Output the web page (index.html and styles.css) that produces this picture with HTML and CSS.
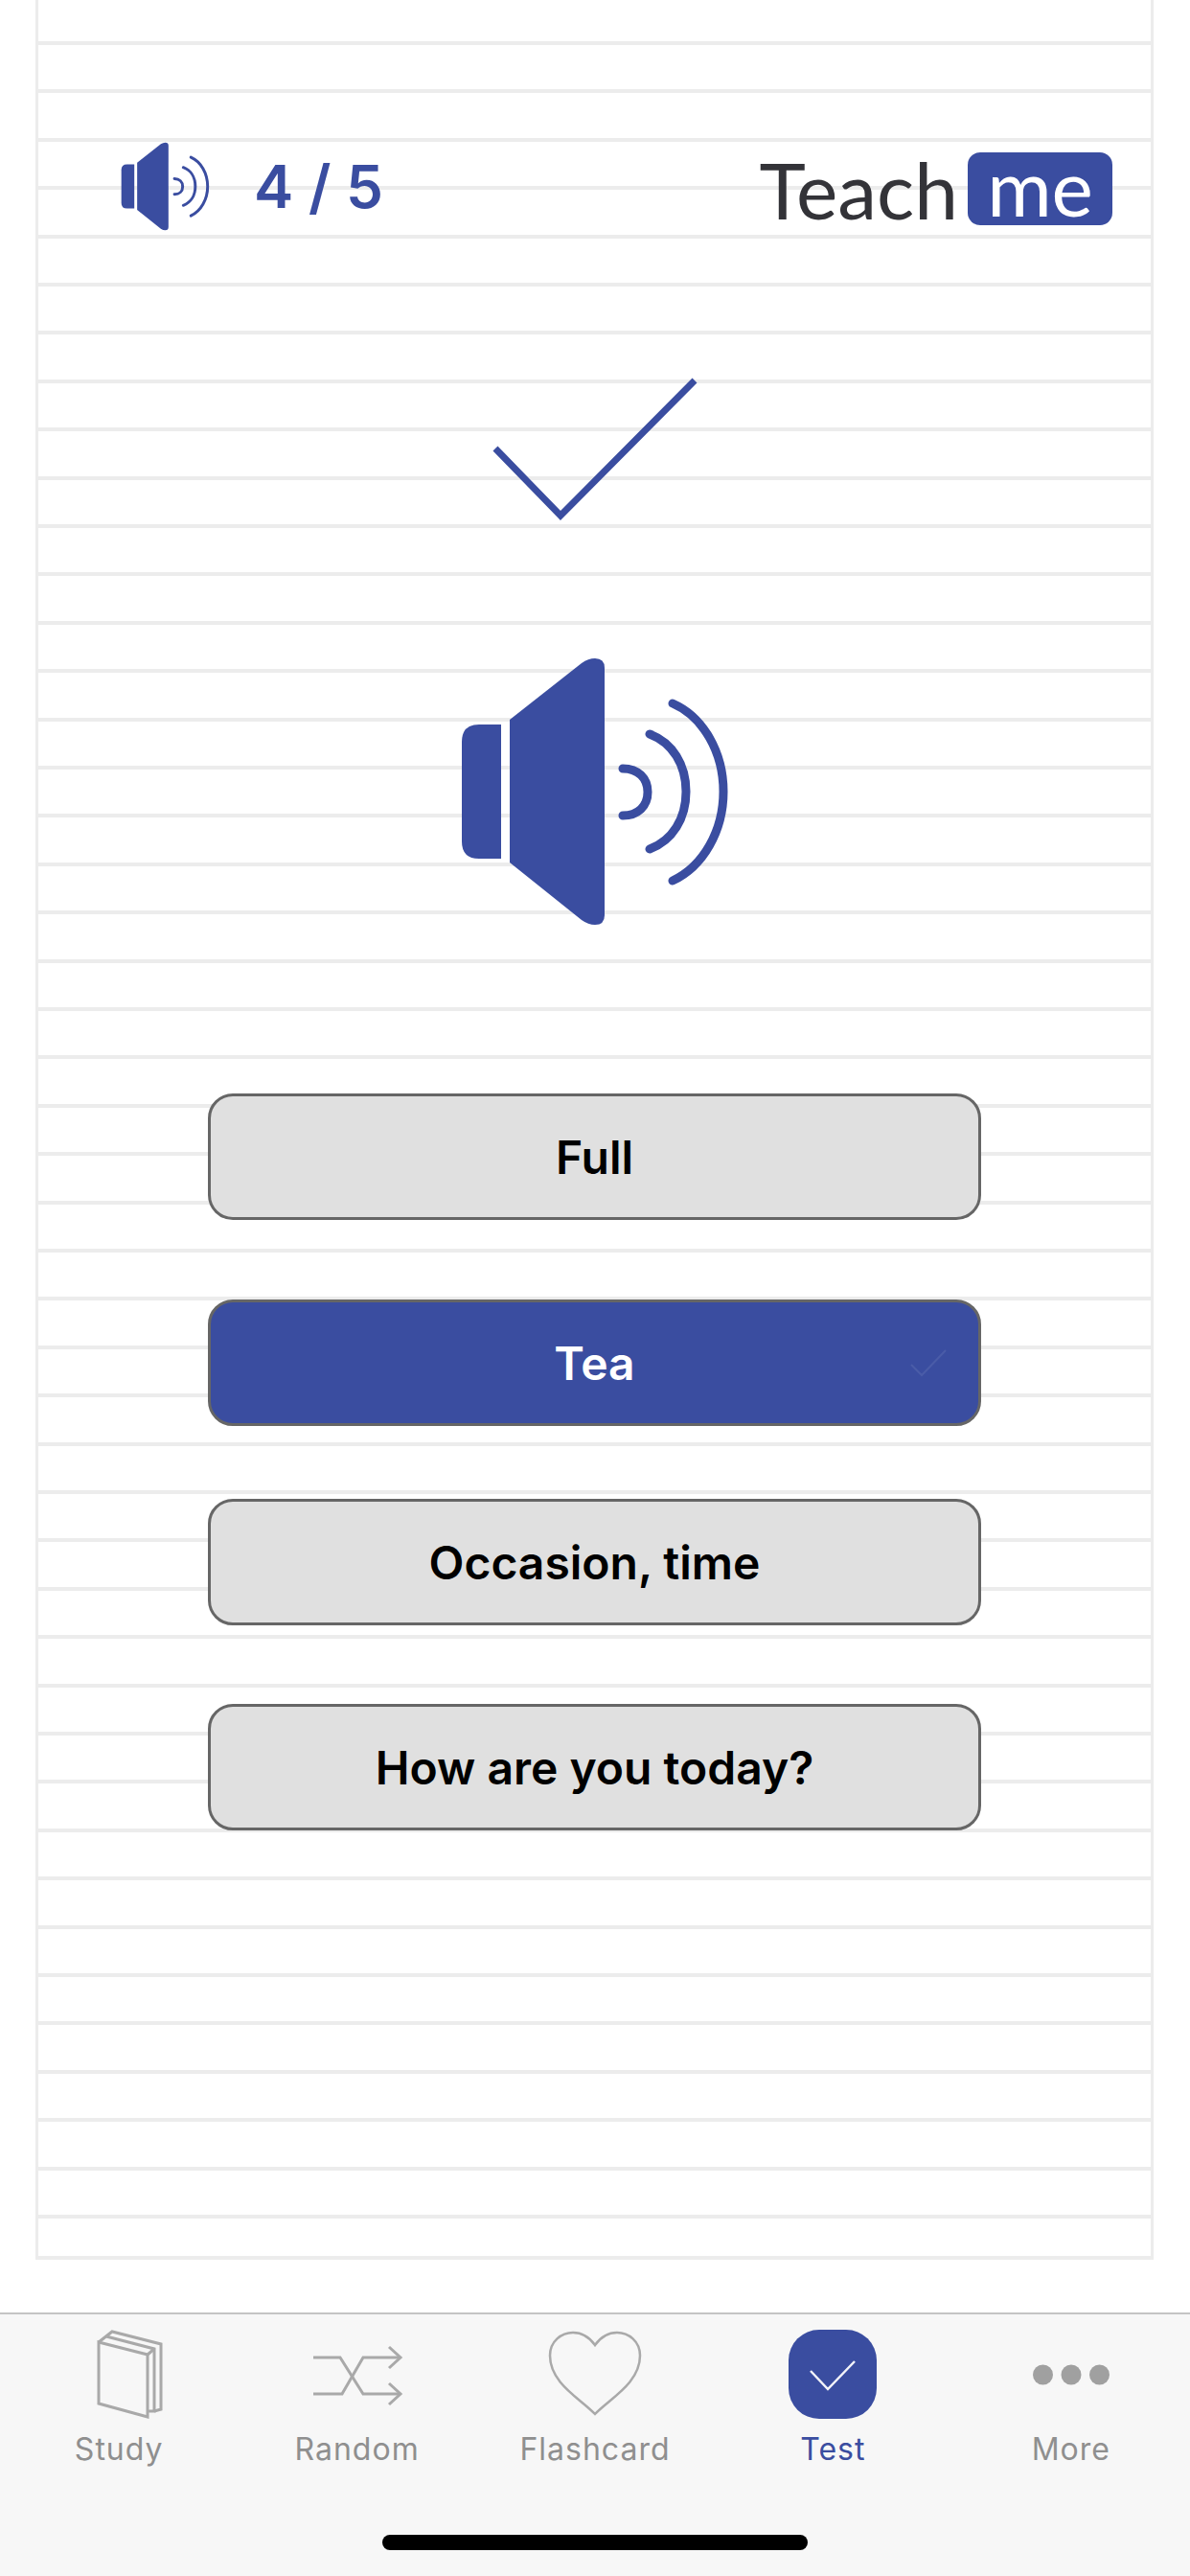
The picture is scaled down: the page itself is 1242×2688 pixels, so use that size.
FILE: index.html
```html
<!DOCTYPE html>
<html lang="en">
<head>
<meta charset="utf-8">
<title>Teach me</title>
<link rel="stylesheet" href="styles.css">
</head>
<body>
<main class="screen">
  <section class="paper">
    <header class="topbar">
      <div class="progress">
        <svg class="speaker-small" viewBox="480 685 280 282"><use href="#speaker"/></svg>
        <span class="count">4 / 5</span>
      </div>
      <div class="logo"><span class="logo-word">Teach</span><span class="logo-badge">me</span></div>
    </header>
    <svg class="result-check" viewBox="510 390 220 156"><path d="M516 468 L584 538 L724 397" fill="none" stroke="#3a4da0" stroke-width="7"/></svg>
    <svg class="speaker-big" viewBox="480 685 280 282">
      <g id="speaker">
        <path fill="#3a4da0" d="M522 756 H499 Q481 756 481 774 V878 Q481 896 499 896 H522 Z"/>
        <path fill="#3a4da0" d="M531 751 L606 692 Q613 687 620 687 Q630 687 630 697 V955 Q630 965 620 965 Q613 965 606 960 L531 900 Z"/>
        <g fill="none" stroke="#3a4da0" stroke-width="9" stroke-linecap="round">
          <path d="M649 802 C665 802 675 812 675 826.5 C675 841 665 851 649 851"/>
          <path d="M677 766 C701 775 715 798 715 826 C715 854 701 877 677 886"/>
          <path d="M701 734 C733 748 754 785 754 826 C754 867 733 904 701 919"/>
        </g>
      </g>
    </svg>
    <div class="answers">
      <button class="answer">Full</button>
      <button class="answer answer-selected">Tea<svg class="faint-check" viewBox="0 0 40 30"><path d="M2 17 L13 28 L38 2" fill="none" stroke="#4a5ca8" stroke-width="2"/></svg></button>
      <button class="answer answer-third">Occasion, time</button>
      <button class="answer answer-fourth">How are you today?</button>
    </div>
  </section>
  <nav class="tabbar">
    <div class="tab">
      <svg class="tab-icon" viewBox="0 0 110 93"><g fill="none" stroke="#a9a9a9" stroke-width="3"><path d="M34 13 L85 26 V91 L34 77 Z"/><path d="M34 13 L48 2 L99 15 V83 L92 85"/><path d="M42 7 L92 20 V85 H85"/><path d="M85 26 L92 20"/></g></svg>
      <span class="tab-label">Study</span>
    </div>
    <div class="tab">
      <svg class="tab-icon" viewBox="0 0 110 93"><g fill="none" stroke="#a9a9a9" stroke-width="3"><path d="M9 29 H37 L61 67 H100"/><path d="M9 67 H39 L61 29 H100"/><path d="M88 18 L100 29 L88 40"/><path d="M88 56 L100 67 L88 78"/></g></svg>
      <span class="tab-label">Random</span>
    </div>
    <div class="tab">
      <svg class="tab-icon" viewBox="0 0 110 93"><path fill="none" stroke="#a9a9a9" stroke-width="2.5" d="M55 88 C40 72 8 56 8 27 C8 12 20 3 32 3 C42 3 50 9 55 16 C60 9 68 3 78 3 C90 3 102 12 102 27 C102 56 70 72 55 88 Z"/></svg>
      <span class="tab-label">Flashcard</span>
    </div>
    <div class="tab tab-active">
      <svg class="tab-icon" viewBox="0 0 110 93"><rect x="9" y="0" width="92" height="93" rx="32" fill="#3a4da0"/><path d="M32 43 L50 62 L78 33" fill="none" stroke="#f2f3f9" stroke-width="2.5"/></svg>
      <span class="tab-label">Test</span>
    </div>
    <div class="tab">
      <svg class="tab-icon" viewBox="0 0 110 93"><g fill="#a0a0a0"><circle cx="25.5" cy="47" r="10.5"/><circle cx="55" cy="47" r="10.5"/><circle cx="84.500" cy="47" r="10.5"/></g></svg>
      <span class="tab-label">More</span>
    </div>
  </nav>
  <div class="home-indicator"></div>
</main>
</body>
</html>
```
FILE: styles.css
```css
* { box-sizing: border-box; }
html, body { margin: 0; padding: 0; background: #fff; }
.screen {
  position: relative;
  width: 1242px;
  height: 2688px;
  overflow: hidden;
  display: flex;
  flex-direction: column;
  font-family: "Inter", "Liberation Sans", sans-serif;
}
.paper {
  width: 1167px;
  height: 2358px;
  margin-left: 37px;
  padding-top: 148px;
  border-left: 3px solid #ececec;
  border-right: 3px solid #ececec;
  border-bottom: 4px solid #ececec;
  background-image: repeating-linear-gradient(to bottom, #ececec 0, #ececec 4px, #fff 4px, #fff 50.4px);
  background-position: 0 43px;
  background-repeat: no-repeat;
  background-size: 100% 2300px;
}
.topbar {
  display: flex;
  justify-content: space-between;
  align-items: center;
  height: 93px;
  padding: 0 40px 0 86px;
}
.progress { display: flex; align-items: center; gap: 46px; }
.speaker-small { width: 93px; height: 93px; display: block; }
.count {
  font-size: 62px;
  font-weight: 600;
  color: #3a4da0;
  line-height: 1;
}
.logo { display: flex; align-items: center; gap: 10px; margin-top: 5px; font-family: "Lato", sans-serif; }
.logo-word { font-size: 82px; line-height: 76px; color: #333338; }
.logo-badge {
  width: 151px;
  height: 76px;
  border-radius: 13px;
  background: #3a4da0;
  color: #fff;
  font-size: 82px;
  line-height: 70px;
  text-align: center;
}
.result-check { display: block; width: 220px; height: 156px; margin: 149px auto 0; }
.speaker-big { display: block; width: 280px; height: 282px; margin: 139px auto 0; }
.answers {
  display: flex;
  flex-direction: column;
  align-items: center;
  margin-top: 174px;
}
.answer {
  position: relative;
  width: 807px;
  height: 132px;
  margin-bottom: 83px;
  border: 3px solid #666;
  border-radius: 26px;
  background: #e0e0e0;
  color: #000;
  font-family: inherit;
  font-size: 48px;
  font-weight: 600;
  padding: 0;
}
.answer-selected { background: #3a4da0; color: #fff; margin-bottom: 76px; }
.answer-fourth { margin-bottom: 0; }
.answer-third { margin-bottom: 82px; }
.faint-check { position: absolute; right: 32px; top: 48px; width: 40px; height: 30px; }
.tabbar {
  display: grid;
  grid-template-columns: repeat(5, 1fr);
  margin-top: 55px;
  height: 275px;
  padding-top: 16px;
  background: #f7f7f7;
  border-top: 2px solid #c4c4c4;
}
.tab { display: flex; flex-direction: column; align-items: center; color: #8f8f8f; }
.tab-icon { display: block; width: 110px; height: 93px; }
.tab-label { margin-top: 12px; font-size: 32px; line-height: 40px; letter-spacing: 1px; }
.tab-active .tab-label { color: #3a4da0; }
.home-indicator {
  position: absolute;
  left: 399px;
  top: 2645px;
  width: 444px;
  height: 16px;
  border-radius: 8px;
  background: #000;
}
```
